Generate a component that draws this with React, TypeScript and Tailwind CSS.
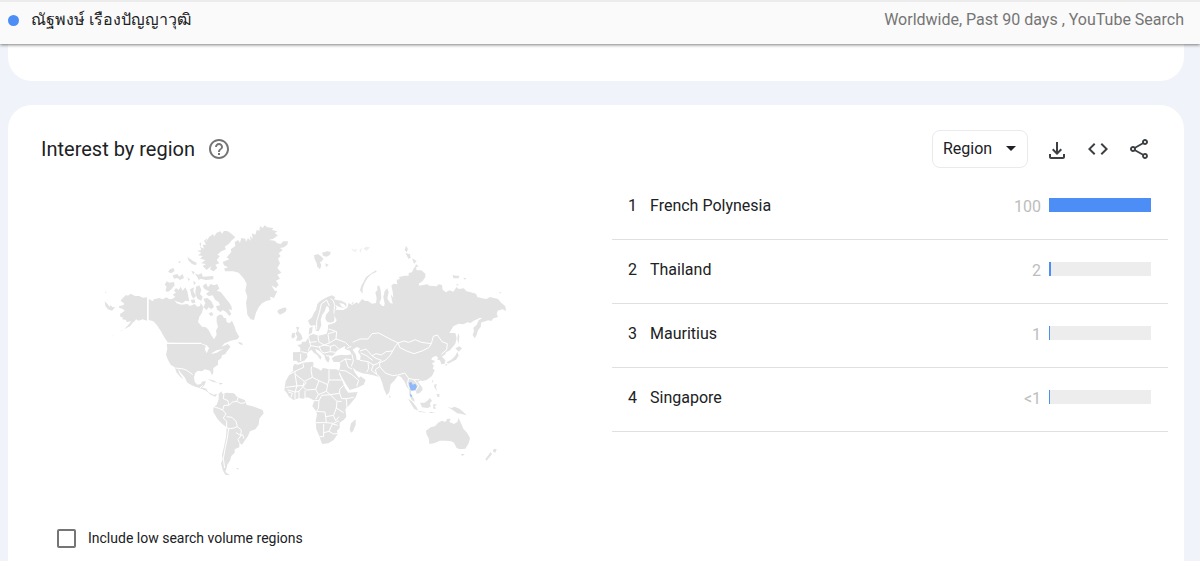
import React from 'react';

type RegionRow = { rank: number; name: string; value: string; percent: number };

const rows: RegionRow[] = [
  { rank: 1, name: 'French Polynesia', value: '100', percent: 100 },
  { rank: 2, name: 'Thailand', value: '2', percent: 2 },
  { rank: 3, name: 'Mauritius', value: '1', percent: 1 },
  { rank: 4, name: 'Singapore', value: '<1', percent: 1 },
];

function Icon({ d, className = 'size-6' }: { d: string; className?: string }) {
  return (
    <svg viewBox="0 0 24 24" fill="currentColor" aria-hidden="true" className={className}>
      <path d={d} />
    </svg>
  );
}

const HELP =
  'M11 18h2v-2h-2v2zm1-16C6.48 2 2 6.48 2 12s4.48 10 10 10 10-4.48 10-10S17.52 2 12 2zm0 18c-4.41 0-8-3.59-8-8s3.59-8 8-8 8 3.59 8 8-3.59 8-8 8zm0-14c-2.21 0-4 1.79-4 4h2c0-1.1.9-2 2-2s2 .9 2 2c0 2-3 1.75-3 5h2c0-2.25 3-2.5 3-5 0-2.21-1.79-4-4-4z';
const DOWNLOAD =
  'M18 17v3H6v-3H4v3c0 1.1.9 2 2 2h12c1.1 0 2-.9 2-2v-3h-2zm-1-4-1.41-1.41L13 14.17V5h-2v9.17l-2.59-2.58L7 13l5 5 5-5z';
const CODE =
  'M9.4 16.6 4.8 12l4.6-4.6L8 6l-6 6 6 6 1.4-1.4zm5.2 0 4.6-4.6-4.6-4.6L16 6l6 6-6 6-1.4-1.4z';
const SHARE =
  'M18 16.08c-.76 0-1.44.3-1.96.77L8.91 12.7c.05-.23.09-.46.09-.7s-.04-.47-.09-.7l7.05-4.11c.54.5 1.25.81 2.04.81 1.66 0 3-1.34 3-3s-1.34-3-3-3-3 1.34-3 3c0 .24.04.47.09.7L8.04 9.81C7.5 9.31 6.79 9 6 9c-1.66 0-3 1.34-3 3s1.34 3 3 3c.79 0 1.5-.31 2.04-.81l7.12 4.16c-.05.21-.08.43-.08.65 0 1.61 1.31 2.92 2.92 2.92s2.92-1.31 2.92-2.92-1.31-2.92-2.92-2.92zM18 4c.55 0 1 .45 1 1s-.45 1-1 1-1-.45-1-1 .45-1 1-1zM6 13c-.55 0-1-.45-1-1s.45-1 1-1 1 .45 1 1-.45 1-1 1zm12 7.02c-.55 0-1-.45-1-1s.45-1 1-1 1 .45 1 1-.45 1-1 1z';

function WorldMap() {
  return (
    <svg
      viewBox="100 220 410 260"
      role="img"
      aria-label="World map of search interest"
      className="w-[410px] max-w-full"
      strokeLinejoin="round"
    >
      {/* Alaska, Canada and the Arctic islands */}
      <g transform="translate(100 220) scale(.33333)" fill="#e2e2e2">
        <path d="M141 232L128 233L118 228L105 228L92 221L84 227L78 225L66 236L62 243L72 250L71 255L58 258L57 263L69 267L74 272L66 278L60 282L61 290L68 292L67 298L78 300L80 306L94 304L84 316L72 328L90 319L98 308L104 304L108 298L116 302L128 298L141 302Z" />
        <path d="M146 236L158 244L162 238L178 234L188 238L200 232L208 238L220 236L230 250L244 254L262 252L270 258L284 252L292 260L300 258L302 248L310 262L306 278L298 290L294 306L306 320L318 322L326 330L334 346L342 358L350 344L348 332L354 320L350 306L350 290L358 284L366 284L372 294L378 294L380 306L388 310L396 302L404 320L408 334L418 350L412 358L392 362L374 370L364 380L376 376L382 372L388 376L386 384L372 392L366 388L350 391L334 400L326 396L330 388L320 376L302 370L204 368L192 350L182 332L170 314L160 304L146 300Z" />
        <path d="M200 184L208 188L222 186L224 196L214 208L204 216L196 212L200 200L194 194ZM228 204L236 210L242 200L248 212L256 202L262 214L266 234L268 244L256 242L248 250L228 244L216 238L226 230L218 224L228 218L222 212ZM270 208L282 202L280 214L288 228L280 236L274 226ZM288 200L298 196L304 210L300 222L308 230L304 242L292 236L286 220ZM272 240L284 238L286 248L276 250Z" />
        <path d="M308 198L318 190L324 202L332 192L342 196L352 192L358 206L350 212L362 216L370 226L378 236L388 248L394 258L396 270L386 268L394 282L388 288L378 276L368 270L362 276L352 270L348 258L360 256L356 246L346 240L338 226L326 228L318 222L328 214L314 208ZM310 236L322 234L334 244L342 260L334 268L326 262L320 270L310 262L316 250Z" />
        <path d="M204 156L210 148L220 144L224 152L214 160ZM218 166L232 162L238 170L248 162L252 174L240 180L232 174L222 176ZM234 126L242 122L240 130ZM262 112L270 116L278 122L290 128L288 136L276 132L266 122ZM274 152L284 156L280 164ZM284 160L294 164L306 160L308 170L340 168L340 178L318 180L302 176L296 180L292 172ZM262 172L270 178L266 184ZM280 182L288 188L282 196Z" />
        <path d="M312 62L322 54L316 68L328 50L340 42L342 50L350 38L362 34L366 42L372 32L384 34L398 44L406 52L394 62L386 72L374 80L378 88L364 94L352 104L360 108L350 120L358 130L346 134L352 144L340 154L330 148L334 138L320 150L308 138L318 132L304 130L316 120L300 116L308 108L294 106L304 98L292 92L304 90L300 80L312 86L308 74L318 74ZM298 72L304 66L302 80Z" />
        <path d="M14 244L22 252L28 260L32 256L38 262L46 262L36 272L24 268L16 258ZM15 215L20 216L16 219ZM414 366L426 368L428 376L418 372ZM326 280L336 276L340 286L332 288ZM68 330L60 336L66 330ZM40 346L34 350L40 347Z" />
        <path d="M143 234V302M202 370H304" fill="none" stroke="#fff" strokeWidth="3.5" />
      </g>

      {/* Greenland, Iceland, Svalbard, the British Isles and Scandinavia */}
      <g transform="translate(220 220) scale(.33333)" fill="#e2e2e2">
        <path d="M8 126L28 118L20 112L34 96L32 88L46 78L44 66L54 60L60 68L64 54L76 56L78 66L84 54L92 62L90 48L98 56L96 40L106 44L110 30L118 32L120 18L128 24L134 16L142 22L160 24L156 30L172 34L164 40L174 46L160 56L146 60L164 62L172 70L182 72L190 64L204 64L202 74L192 82L180 84L188 90L176 100L182 108L174 116L180 130L172 144L184 158L172 164L180 176L168 182L176 194L168 204L154 196L164 212L172 214L162 234L150 230L152 240L140 242L126 250L116 262L108 278L102 300L92 298L82 284L80 264L78 248L82 230L76 212L80 192L72 176L56 158L40 154L16 154L12 146L24 142L12 136Z" />
        <path d="M174 270L182 266L196 262L200 268L196 276L180 284L172 276ZM282 106L294 102L302 108L310 116L306 124L300 126L304 136L300 148L292 140L290 130L284 118ZM306 98L322 94L332 96L330 104L320 110L310 108ZM316 130L326 134L318 142Z" />
        <path d="M394 84L402 90L410 86L408 96L398 92ZM418 90L426 84L422 98ZM430 86L438 80L450 82L440 92Z" opacity=".55" />
        <path d="M264 302L276 292L282 278L288 270L292 252L300 244L312 236L324 230L336 226L346 232L342 238L350 240L364 242L378 250L380 258L370 264L356 260L346 254L350 264L344 278L346 290L342 304L332 308L322 306L316 296L318 284L328 272L326 262L320 258L314 274L306 286L302 300L304 316L296 334L288 332L284 316L274 318L268 312Z" />
        <path d="M228 320L238 322L234 332L244 344L248 356L240 362L228 362L232 350L226 340L232 334ZM216 340L224 338L226 350L218 356L214 350ZM268 324L278 320L276 338L266 344Z" />
        <path d="M290 328V304L298 278L304 252L320 240L328 258M332 236L340 242L344 256L342 276L346 300M266 320L290 318" fill="none" stroke="#fff" strokeWidth="3" />
      </g>

      {/* Europe and Asia */}
      <g transform="translate(340 235) scale(.33333)" fill="#e2e2e2">
        <path d="M-14 226L-4 224L8 226L22 218L26 204L36 210L50 202L56 206L66 192L76 198L84 198L96 206L108 204L110 190L106 172L112 166L112 152L118 152L122 166L124 190L118 204L126 212L132 214L134 206L130 186L134 168L142 160L146 172L142 190L150 204L158 206L152 178L160 188L158 170L154 152L160 146L172 148L170 134L180 132L176 126L194 122L206 122L206 114L216 112L222 98L228 96L230 106L244 106L256 116L256 126L248 138L236 146L238 152L262 148L268 152L290 154L296 148L306 150L308 164L318 172L328 166L340 170L350 156L356 162L372 160L378 168L392 172L408 176L412 186L426 190L440 192L450 186L474 192L484 204L496 214L498 228L486 222L480 226L474 226L470 236L474 246L460 250L454 258L444 256L432 260L424 262L422 276L414 286L410 300L404 310L398 300L402 288L400 278L410 270L416 256L426 250L420 248L400 258L392 264L382 262L370 268L356 266L340 274L328 294L346 294L350 310L346 326L330 346L318 352L316 358L308 364L304 362L316 376L314 386L304 388L300 376L292 374L294 368L288 362L276 368L274 374L286 378L276 386L282 392L278 400L284 406L276 423L260 435L248 438L240 436L234 441L246 456L248 464L240 473L230 477L228 468L218 462L213 470L214 481L222 491L224 501L214 493L208 479L208 465L200 455L194 441L184 427L174 421L164 436L152 448L148 471L140 481L132 463L126 441L120 427L108 423L94 419L67 415L49 407L37 397L45 413L57 429L62 424L77 435L71 449L49 459L29 465L19 449L5 425L-3 407L1 391L-1 381L-19 381L-25 370L-14 363L4 359L20 361L35 358L29 347L14 342L16 333L2 340L-8 346L-17 357L-23 363L-34 364L-31 372L-35 383L-43 375L-47 361L-63 347L-75 341L-70 352L-55 366L-59 374L-68 361L-80 352L-85 344L-95 350L-99 357L-97 365L-107 377L-125 383L-130 377L-141 377L-141 352L-119 351L-119 338L-128 330L-116 328L-114 320L-103 320L-90 301L-80 297L-64 302L-40 296L-36 282L-36 270L-15 263L-10 256L-18 240Z" />
        <path d="M68 176L60 166L64 152L72 138L78 126L92 116L108 106L110 110L94 118L82 130L74 144L68 160ZM198 32L204 42L200 52L194 46ZM196 54L210 58L212 68L206 72ZM216 70L230 78L222 86ZM228 88L236 94L224 98ZM338 120L348 122L358 122L356 130L340 130ZM370 128L380 130L374 134ZM350 146L356 150L350 152ZM478 170L484 172L480 176ZM34 204L42 200L38 208Z" />
        <path d="M354 294L358 304L356 326L352 314ZM346 340L358 334L366 340L356 350ZM352 350L356 362L348 374L336 380L324 386L320 382L334 374L346 362ZM316 386L322 388L318 394Z" />
        <path d="M-2 204L10 206L18 214L10 218L4 214Z" fill="#fff" />
        <path d="M38 344L50 336L60 340L54 350L62 362L60 376L50 374L48 360Z" fill="#fff" />
        <path
          d="M38 322L60 312H84L96 296L116 294L150 312L174 324L166 334L158 348L138 350L124 360L108 356L96 362L78 342L60 348M174 324L192 318L206 322L226 314L244 322L274 326L266 338L246 348L222 356L200 348L180 338L174 324M274 326L280 304L292 300L306 320L322 326L320 344L304 358M158 348L150 362L136 376L118 384L120 396L136 414L158 422L172 420M60 376L84 380L100 390L112 386L124 376L108 370L96 362M100 390L94 406L110 418M84 380L86 400L80 412M62 354L80 362L98 376M118 396L106 404L110 418L120 427M36 358L40 378L34 394M0 382L16 372L34 374M16 372L24 396L36 402M0 406L18 408L34 418L56 436L50 454M174 420L194 414L206 430L222 434L238 434M206 430L202 446L208 462M222 434L236 452L228 466"
          fill="none"
          stroke="#fff"
          strokeWidth="3"
        />
        <path
          d="M-116 350L-98 354M-118 356V378M-94 308L-88 332L-96 348M-66 302L-64 320L-48 330L-32 324L-36 298M-88 332L-64 336L-48 330L-28 334L-30 350L-14 352M-32 324L-12 312L-10 290L-34 282M-12 312L16 322L28 334M-62 336L-56 350L-46 354L-30 350M-22 364L-42 362M-28 334L-16 330L-4 342M-92 322L-70 320M34 334L20 340M-36 296L-14 290"
          fill="none"
          stroke="#fff"
          strokeWidth="3"
        />
      </g>

      {/* Africa */}
      <g transform="translate(275 340) scale(.33333)" fill="#e2e2e2">
        <path d="M58 72L70 74L84 68L112 65L116 70L114 80L130 86L138 92L144 84L164 88L184 88L194 94L192 102L202 124L210 144L220 158L248 156L242 172L224 194L211 208L214 230L206 240L194 248L194 264L186 272L188 282L176 300L160 310L142 312L138 304L134 290L124 268L122 244L126 222L122 212L112 198L118 182L108 176L98 172L84 176L72 174L56 180L42 170L36 160L28 150L32 124L42 106L54 92L54 80ZM242 238L242 254L234 274L228 278L224 268L228 250ZM342 166L348 170L344 174Z" />
        <path
          d="M84 70L86 82L60 94L42 104M60 94V102L88 124L112 112L108 90L110 80M60 102L66 138L32 142M66 138L88 136L94 126M88 124L84 140L94 150L122 148L132 122L112 112M132 122L158 134L162 120V88M162 120H200M158 134L154 154L130 164L122 178M122 148L130 164M154 154L166 164L194 160L194 148L206 136M194 160L200 176H214L236 172M214 176L216 204M166 164L140 166L132 182H116M166 164L186 184H200M186 184L184 204L206 218M132 182L130 206L124 214M124 214L150 216L152 230L176 226L184 204M122 248H154L152 230M154 248L176 250L192 242M146 252V290H134M146 278L162 274L172 252M162 274L176 282L188 280M172 252L188 256M176 228L182 242L192 230M66 138L60 156L38 150M60 156V178M72 154V174M90 152V176M84 140L72 154L60 156M40 156L52 160L48 172"
          fill="none"
          stroke="#fff"
          strokeWidth="3"
        />
      </g>

      {/* United States, Central and South America */}
      <g transform="translate(150 340) scale(.33333)" fill="#e2e2e2">
        <path d="M50 12H154L168 18L164 26L170 40L176 26L184 24L190 32L184 42L200 38L214 30L224 28L234 14L242 20L232 32L226 42L216 46L214 54L204 62L204 74L190 84L190 98L186 106L180 92L164 88L156 94L144 92L136 98L132 112L134 126L142 134L152 132L158 124L168 124L162 138L154 142L170 146L176 156L190 164L202 162L196 170L182 164L168 152L148 144L130 138L112 128L104 112L92 98L84 86L88 100L100 118L92 112L80 98L74 82L62 74L54 60L48 44L52 26ZM172 118L188 120L204 128L190 126ZM206 128L220 130L210 134ZM176 132L182 132ZM222 130L230 132" />
        <path d="M206 162L214 154L218 162L228 158L252 160L262 172L284 180L290 194L312 200L322 204L338 210L341 220L328 236L326 254L316 268L300 274L294 288L284 302L276 314L268 308L268 322L254 328L254 338L244 348L240 362L232 374L230 384L226 396L240 406L226 404L218 390L213 370L218 358L216 344L222 320L228 290L230 262L214 250L202 236L190 216L190 204L200 194L206 178ZM258 384L266 384L264 389Z" />
        <path
          d="M76 84L100 87L112 92L128 104M222 160L220 176L234 182L236 196L222 196L218 210L204 204L194 202M218 210L228 222L220 234L230 244L230 264M230 230L246 232L258 244L262 260L252 264L242 266L230 264M262 260L274 270L272 286L258 278M272 286L278 284L282 296M268 308L264 298L274 286M236 196L248 186L260 184L264 174M260 184L272 190L286 188M236 266L232 294L226 322L220 356L224 384M150 144L158 136M170 148L180 160"
          fill="none"
          stroke="#fff"
          strokeWidth="3"
        />
      </g>

      {/* South-east Asia and Oceania */}
      <g transform="translate(370 340) scale(.33333)" fill="#e2e2e2">
        <path d="M168 272L182 262L196 258L204 248L216 242L226 246L232 236L242 236L238 246L252 252L262 246L266 234L274 252L280 266L292 280L300 294L296 310L286 326L270 328L260 324L252 308L244 304L228 302L210 302L192 310L178 312L176 294L170 284ZM272 342L284 342L278 348ZM372 326L380 328L376 338L368 334ZM362 336L366 342L350 362L346 358ZM114 176L126 184L140 202L144 212L132 206ZM150 188L164 188L172 182L180 174L186 182L180 190L182 200L172 204L156 202ZM144 212L164 216L170 218L148 216ZM190 192L202 194L194 198L198 206L190 206ZM178 216L198 216L180 220ZM232 200L244 204L254 200L268 206L280 216L290 226L276 222L262 220L248 210ZM192 134L200 132L198 144L202 154L194 144ZM200 162L208 162L208 172L202 170ZM186 120L190 124L186 128ZM146 120L152 118L150 124ZM122 172L132 180L130 184L124 178Z" />
        <path d="M117 128L124 126L128 134L136 131L141 140L136 150L128 152L122 150L119 142ZM120 162L125 164L127 171L121 169Z" fill="#8fb8fb" />
      </g>
    </svg>
  );
}

export default function App() {
  return (
    <div className="flex min-h-screen flex-col bg-[#f0f3f9] font-[Roboto,'Noto_Sans',sans-serif] text-[#202124]">
      <header className="sticky top-0 z-10 flex h-11 items-center justify-between border-t-2 border-[#ececec] bg-[#fafafa] pr-4 pb-1.5 pl-2 text-base shadow-[0_1px_3px_rgba(0,0,0,0.5)]">
        <div className="flex items-center gap-3">
          <span className="size-[11px] rounded-full bg-[#4c8df6]" />
          <span>ณัฐพงษ์ เรืองปัญญาวุฒิ</span>
        </div>
        <p className="text-[#757575]">Worldwide, Past 90 days , YouTube Search</p>
      </header>

      <main className="flex flex-1 flex-col gap-6 pr-4 pl-2">
        <div className="h-[37px] rounded-b-3xl bg-white" />

        <section className="flex-1 rounded-t-3xl bg-white pt-[25px] pr-4 pb-2 pl-[33px]">
          <div className="flex items-center justify-between pr-[17px]">
            <div className="flex items-center gap-3">
              <h2 className="text-xl">Interest by region</h2>
              <button type="button" aria-label="Help" className="text-[#757575]">
                <Icon d={HELP} />
              </button>
            </div>
            <div className="flex items-center gap-[17px] text-[#3c4043]">
              <div className="relative text-[#202124]">
                <select
                  aria-label="Resolution"
                  className="h-[38px] w-24 appearance-none rounded-lg border border-[#e8eaed] bg-white pl-[10px] text-base"
                >
                  <option>Region</option>
                </select>
                <svg
                  viewBox="0 0 10 5"
                  aria-hidden="true"
                  className="pointer-events-none absolute top-4 right-3 h-[5px] w-[10px]"
                >
                  <path d="M0 0h10L5 5z" fill="currentColor" />
                </svg>
              </div>
              <button type="button" aria-label="Download">
                <Icon d={DOWNLOAD} />
              </button>
              <button type="button" aria-label="Embed">
                <Icon d={CODE} />
              </button>
              <button type="button" aria-label="Share">
                <Icon d={SHARE} />
              </button>
            </div>
          </div>

          <div className="grid grid-cols-[571fr_556fr]">
            <div className="flex flex-col">
              <div className="pt-[52px] pl-[59px]">
                <WorldMap />
              </div>
              <label className="mt-12 ml-4 flex items-center gap-3 self-start text-sm">
                <input
                  type="checkbox"
                  className="size-[19px] appearance-none rounded-xs border-2 border-[#757575] checked:bg-[#4c8df6]"
                />
                Include low search volume regions
              </label>
            </div>

            <table className="mt-[7px] w-full self-start">
              <tbody>
                {rows.map((row) => (
                  <tr key={row.rank} className="h-16 border-b border-[#e0e0e0]">
                    <td className="w-[38px] pb-0.5 pl-4">{row.rank}</td>
                    <td className="pb-0.5">{row.name}</td>
                    <td className="w-20 pr-2 text-right text-[#bdbdbd]">{row.value}</td>
                    <td className="w-[119px] pr-[17px] pb-1">
                      <div className="h-[14px] bg-[#ededed]">
                        <div className="h-full bg-[#4c8df6]" style={{ width: `${row.percent}%` }} />
                      </div>
                    </td>
                  </tr>
                ))}
              </tbody>
            </table>
          </div>
        </section>
      </main>
    </div>
  );
}
